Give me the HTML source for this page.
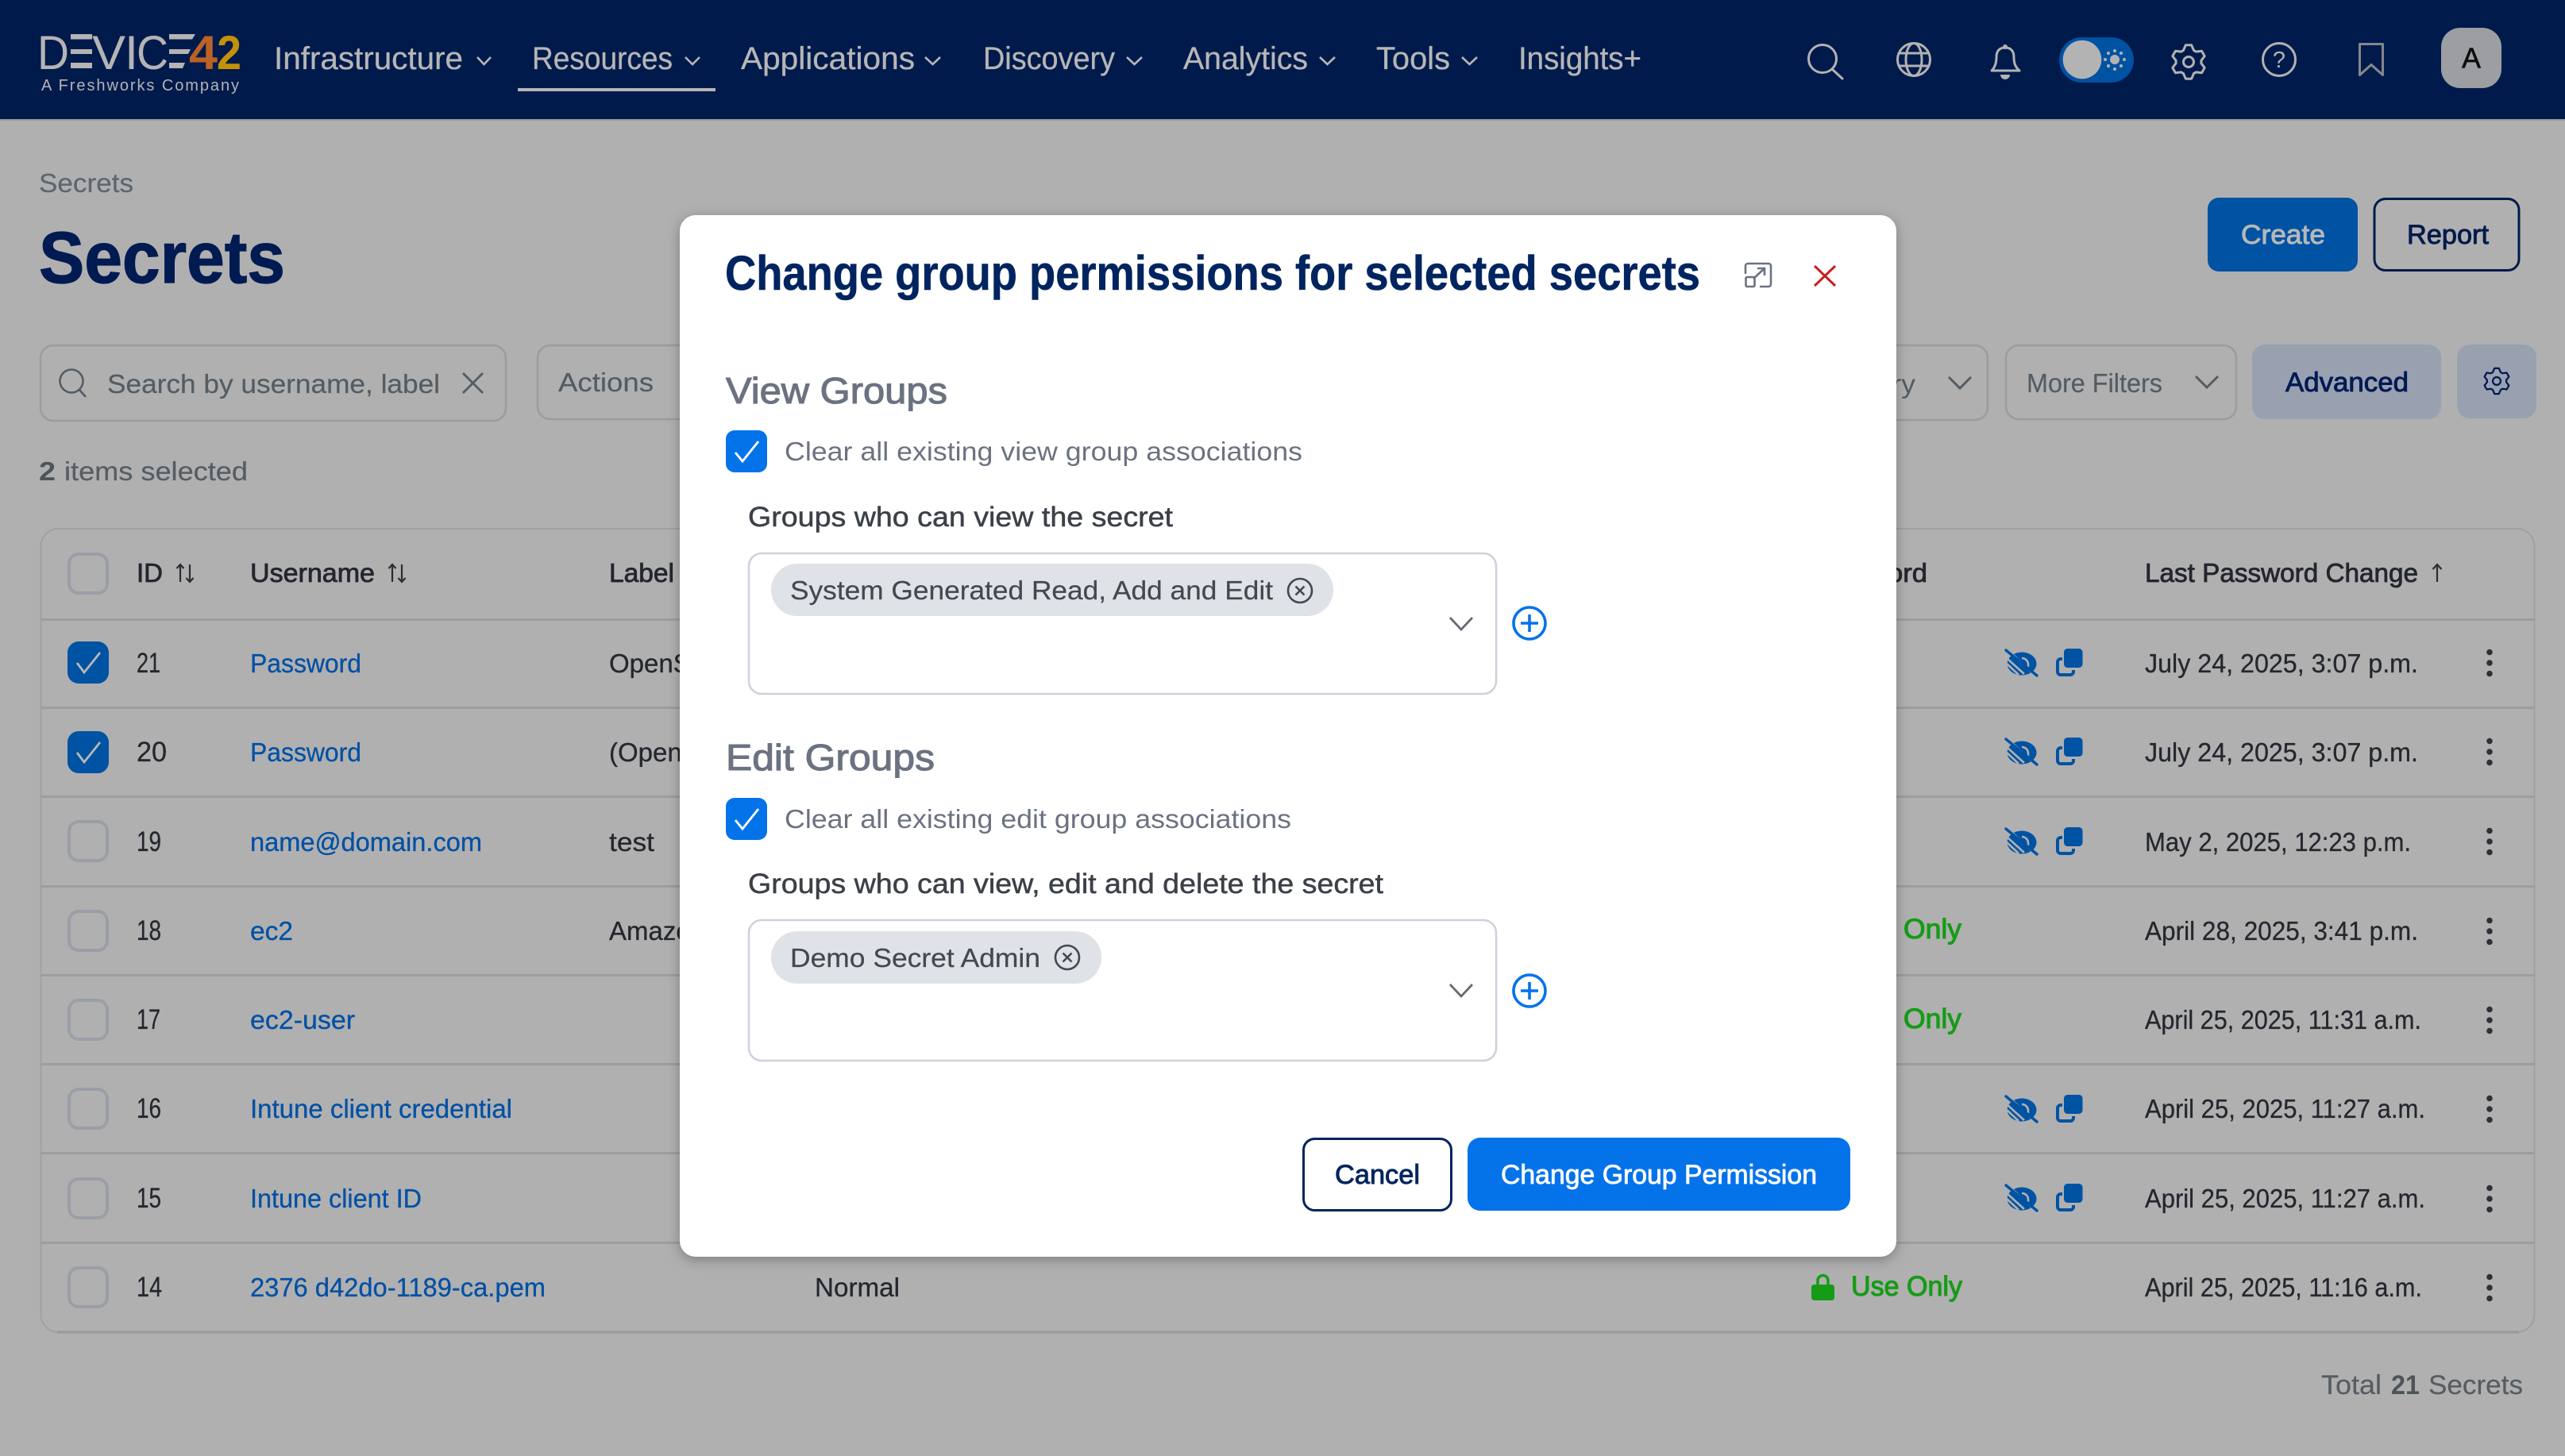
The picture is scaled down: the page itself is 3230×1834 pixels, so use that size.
<!DOCTYPE html>
<html lang="en">
<head>
<meta charset="utf-8">
<title>Secrets</title>
<style>
html,body{margin:0;padding:0;background:#b0b0b0;width:3230px;height:1834px;overflow:hidden}
svg{display:block}
text{font-family:"Liberation Sans",sans-serif;white-space:pre}
.nav{font-size:40px;fill:#b6b6b6;stroke:#b6b6b6;stroke-width:.3}
.row{font-size:33px;fill:#24272e;stroke:#24272e;stroke-width:.3}
.lnk{font-size:33px;fill:#0050a5;stroke:#0050a5;stroke-width:.3}
.hd{font-size:33px;fill:#23262e;stroke:#23262e;stroke-width:.8}
.ok{font-size:35px;fill:#169b16;stroke:#169b16;stroke-width:1.1}
.sec{font-size:46px;fill:#6b7280;stroke:#6b7280;stroke-width:1.1}
.clr{font-size:33px;fill:#6b7280}
.lbl{font-size:35px;fill:#3c4048;stroke:#3c4048;stroke-width:.5}
.chip{font-size:33px;fill:#44484f;stroke:#44484f;stroke-width:.2}
</style>
</head>
<body>
<svg xmlns="http://www.w3.org/2000/svg" width="3230" height="1834" viewBox="0 0 3230 1834">
<defs>
<symbol id="gear" overflow="visible" viewBox="-25 -25 50 50" width="50" height="50">
<polygon points="-6.5,-14.6 -3.7,-21.2 3.7,-21.2 6.5,-14.6 9.4,-12.9 16.5,-13.8 20.2,-7.4 15.9,-1.7 15.9,1.7 20.2,7.4 16.5,13.8 9.4,12.9 6.5,14.6 3.7,21.2 -3.7,21.2 -6.5,14.6 -9.4,12.9 -16.5,13.8 -20.2,7.4 -15.9,1.7 -15.9,-1.7 -20.2,-7.4 -16.5,-13.8 -9.4,-12.9" fill="none" stroke="currentColor" stroke-width="3" stroke-linejoin="round"/>
<circle r="6.5" fill="none" stroke="currentColor" stroke-width="3"/>
</symbol>
<symbol id="eye" overflow="visible" viewBox="0 0 42 35" width="42" height="35">
<ellipse cx="21" cy="18" rx="18.5" ry="14.5" fill="#0052a3"/>
<path d="M2 11 L24 31 M2 18 L17 32 M9 6 L34 29" stroke="#b0b0b0" stroke-width="2.6" fill="none"/>
<path d="M21 11 a8 8 0 0 1 8 8 l0 3" stroke="#b0b0b0" stroke-width="2.6" fill="none"/>
<path d="M1 1 L40 33" stroke="#0052a3" stroke-width="3.4" stroke-linecap="round"/>
</symbol>
<symbol id="copy" overflow="visible" viewBox="0 0 34 35" width="34" height="35">
<path d="M8 13 H6 a4 4 0 0 0 -4 4 V29 a4 4 0 0 0 4 4 H18 a4 4 0 0 0 4 -4 V27" fill="none" stroke="#0052a3" stroke-width="4"/>
<rect x="10" y="0" width="23.5" height="24" rx="4.5" fill="#0052a3"/>
</symbol>
<symbol id="cb" overflow="visible" viewBox="0 0 52 53" width="52" height="53">
<rect x="2" y="2" width="48" height="49" rx="12" fill="none" stroke="#9a9ea6" stroke-width="4"/>
</symbol>
<symbol id="cbon" overflow="visible" viewBox="0 0 52 53" width="52" height="53">
<rect width="52" height="53" rx="14" fill="#0052a3"/>
<path d="M12 27 L21 39 L41 14" fill="none" stroke="#b8b8b8" stroke-width="2.8"/>
</symbol>
<symbol id="dots" overflow="visible" viewBox="0 0 10 36" width="10" height="36">
<circle cx="5" cy="4.5" r="3.8" fill="#2d3038"/><circle cx="5" cy="18" r="3.8" fill="#2d3038"/><circle cx="5" cy="31.5" r="3.8" fill="#2d3038"/>
</symbol>
<symbol id="cbm" overflow="visible" viewBox="0 0 52 53" width="52" height="53">
<rect width="52" height="53" rx="11" fill="#0473ea"/>
<path d="M12 28 L21 39 L41 14" fill="none" stroke="#fff" stroke-width="2.8"/>
</symbol>
<symbol id="plus" overflow="visible" viewBox="0 0 44 44" width="44" height="44">
<circle cx="22" cy="22" r="20" fill="none" stroke="#0473ea" stroke-width="3.6"/>
<path d="M22 11 V33 M11 22 H33" stroke="#0473ea" stroke-width="3.6"/>
</symbol>
<symbol id="xc" overflow="visible" viewBox="0 0 34 34" width="34" height="34">
<circle cx="17" cy="17" r="15" fill="none" stroke="#44484f" stroke-width="2.6"/>
<path d="M11.5 11.5 L22.5 22.5 M22.5 11.5 L11.5 22.5" stroke="#44484f" stroke-width="2.6"/>
</symbol>
<symbol id="sort" overflow="visible" viewBox="0 0 24 24" width="24" height="24">
<path d="M6 23 V1 M1.5 6 L6 1 L10.5 6 M18 1 V23 M13.5 18 L18 23 L22.5 18" fill="none" stroke="#2a2d34" stroke-width="2.2"/>
</symbol>
</defs>

<!-- nav -->
<rect width="3230" height="150" fill="#001a4b"/>
<rect y="150" width="3230" height="2" fill="#9a9a9f"/>
<g fill="#b4b4b4" font-size="60">
<text x="47" y="87" font-size="60" textLength="40" lengthAdjust="spacingAndGlyphs" fill="#b4b4b4">D</text>
<path d="M89 43h27v6.500h-27zM89 62h27v6h-27zM89 79h27v7h-27z"/>
<text x="116" y="87" font-size="60" textLength="42" lengthAdjust="spacingAndGlyphs" fill="#b4b4b4">V</text>
<text x="157" y="87" font-size="60" textLength="17" lengthAdjust="spacingAndGlyphs" fill="#b4b4b4">I</text>
<text x="172" y="87" font-size="60" textLength="40" lengthAdjust="spacingAndGlyphs" fill="#b4b4b4">C</text>
<path d="M213 43h33l-4 6.500h-29zM213 62h27l-3 6h-24zM213 79h20l-3 7h-17z"/>
</g>
<text x="238" y="87" font-size="60" textLength="36" lengthAdjust="spacingAndGlyphs" fill="#bb6224" font-weight="bold">4</text>
<text x="273" y="87" font-size="60" textLength="31" lengthAdjust="spacingAndGlyphs" fill="#c4920a" font-weight="bold">2</text>
<text x="52" y="114" font-size="20" textLength="249" fill="#b4b4b4">A Freshworks Company</text>

<text class="nav" x="345" y="87" textLength="238" lengthAdjust="spacingAndGlyphs">Infrastructure</text>
<text class="nav" x="670" y="87" textLength="177" lengthAdjust="spacingAndGlyphs">Resources</text>
<text class="nav" x="933" y="87" textLength="219" lengthAdjust="spacingAndGlyphs">Applications</text>
<text class="nav" x="1238" y="87" textLength="166" lengthAdjust="spacingAndGlyphs">Discovery</text>
<text class="nav" x="1490" y="87" textLength="157" lengthAdjust="spacingAndGlyphs">Analytics</text>
<text class="nav" x="1733" y="87" textLength="93" lengthAdjust="spacingAndGlyphs">Tools</text>
<text class="nav" x="1912" y="87" textLength="155" lengthAdjust="spacingAndGlyphs">Insights+</text>
<g fill="none" stroke="#b6b6b6" stroke-width="2.6">
<path d="M601 72l8.500 9 8.500-9M863 72l9 9 9-9M1165 72l9.500 9 9.500-9M1419 72l9.500 9 9.500-9M1662 72l9.500 9 9.500-9M1841 72l9.500 9 9.500-9"/>
</g>
<rect x="652" y="111" width="249" height="4" fill="#b6b6b6"/>

<g fill="none" stroke="#b2b2b2" stroke-width="3">
<circle cx="2295" cy="74" r="17.500"/><path d="M2307 87l13 12" stroke-linecap="round"/>
<circle cx="2410" cy="75" r="20.500"/><ellipse cx="2410" cy="75" rx="10" ry="20.500"/><path d="M2391 67h38M2391 83h38"/>
<path d="M2508 89C2513 84 2514 78 2514 72C2514 64 2518 60 2525 60C2532 60 2536 64 2536 72C2536 78 2537 84 2543 89Z" stroke-linejoin="round"/>
<circle cx="2870" cy="75" r="20.500"/>
</g>
<circle cx="2525" cy="59" r="3" fill="#b2b2b2"/>
<path d="M2519 94h12a6 6 0 0 1-12 0z" fill="#b2b2b2"/>
<rect x="2593" y="47" width="94" height="57" rx="28.500" fill="#0052a3"/>
<circle cx="2622" cy="75" r="24.300" fill="#b3b3b3"/>
<g fill="#b3b3b3"><circle cx="2663" cy="75" r="6"/><circle cx="2663" cy="64" r="2"/><circle cx="2663" cy="87" r="2"/><circle cx="2651" cy="75" r="2"/><circle cx="2675" cy="75" r="2"/><circle cx="2655" cy="67" r="2"/><circle cx="2671" cy="67" r="2"/><circle cx="2655" cy="83" r="2"/><circle cx="2671" cy="83" r="2"/></g>
<use href="#gear" x="2731" y="53" color="#b2b2b2"/>
<text x="2870" y="85" font-size="29" text-anchor="middle" fill="#b2b2b2">?</text>
<path d="M2971.500 55.500h29v39l-14.500-13-14.500 13z" fill="none" stroke="#85878c" stroke-width="3" stroke-linejoin="round"/>
<rect x="3074" y="35" width="76" height="76" rx="24" fill="#9c9ea2"/>
<text x="3112" y="85.500" font-size="36" text-anchor="middle" fill="#0c0c0c" stroke="#0c0c0c" stroke-width=".5">A</text>

<!-- page header -->
<text x="49" y="242" font-size="33" fill="#5d6670" stroke="#5d6670" stroke-width=".2" textLength="119" lengthAdjust="spacingAndGlyphs">Secrets</text>
<text x="49" y="356" font-size="92" font-weight="bold" fill="#001a52" stroke="#001a52" stroke-width="1.2" textLength="310" lengthAdjust="spacingAndGlyphs">Secrets</text>

<rect x="2780" y="249" width="189" height="93" rx="14" fill="#0052a3"/>
<text x="2822" y="307" font-size="34" fill="#b8b8b8" stroke="#b8b8b8" stroke-width=".9" textLength="106" lengthAdjust="spacingAndGlyphs">Create</text>
<rect x="2990" y="250.500" width="182" height="90" rx="14" fill="none" stroke="#001a4b" stroke-width="3"/>
<text x="3031" y="307" font-size="34" fill="#001a4b" stroke="#001a4b" stroke-width=".9" textLength="103" lengthAdjust="spacingAndGlyphs">Report</text>

<!-- filters -->
<rect x="51" y="435" width="586" height="95" rx="16" fill="none" stroke="#9a9ca1" stroke-width="2.500"/>
<circle cx="90" cy="480" r="14.500" fill="none" stroke="#545c63" stroke-width="2.600"/><path d="M100 491l8 9" stroke="#545c63" stroke-width="2.600"/>
<text x="135" y="495" font-size="33" fill="#545c63" stroke="#545c63" stroke-width=".2" textLength="419" lengthAdjust="spacingAndGlyphs">Search by username, label</text>
<path d="M583 470l25 25M608 470l-25 25" stroke="#545c63" stroke-width="2.800" fill="none"/>
<rect x="677" y="435" width="400" height="93" rx="16" fill="none" stroke="#9a9ca1" stroke-width="2.500"/>
<text x="703" y="493" font-size="33" fill="#545c63" stroke="#545c63" stroke-width=".2" textLength="120" lengthAdjust="spacingAndGlyphs">Actions</text>
<rect x="2200" y="435" width="303" height="94" rx="16" fill="none" stroke="#9a9ca1" stroke-width="2.500"/>
<text x="2268" y="495" font-size="33" fill="#545c63" textLength="144" lengthAdjust="spacingAndGlyphs">Category</text>
<path d="M2454 475l14 14 14-14" fill="none" stroke="#545c63" stroke-width="3"/>
<rect x="2526" y="435" width="290" height="93" rx="16" fill="none" stroke="#9a9ca1" stroke-width="2.500"/>
<text x="2552" y="494" font-size="33" fill="#545c63" stroke="#545c63" stroke-width=".2" textLength="171" lengthAdjust="spacingAndGlyphs">More Filters</text>
<path d="M2765 474l14 14 14-14" fill="none" stroke="#545c63" stroke-width="3"/>
<rect x="2836" y="434" width="238" height="94" rx="16" fill="#99a1b1"/>
<text x="2878" y="493" font-size="34" fill="#001a52" stroke="#001a52" stroke-width=".9" textLength="155" lengthAdjust="spacingAndGlyphs">Advanced</text>
<rect x="3094" y="434" width="100" height="93" rx="16" fill="#99a1b1"/>
<g transform="translate(3144 480) scale(.76)"><use href="#gear" x="-25" y="-25" color="#001a52"/></g>

<text x="49" y="605" font-size="33" fill="#4c545a" font-weight="bold" textLength="21" lengthAdjust="spacingAndGlyphs">2</text>
<text x="81" y="605" font-size="33" fill="#555d64" stroke="#555d64" stroke-width=".2" textLength="231" lengthAdjust="spacingAndGlyphs">items selected</text>

<!-- table -->
<rect x="51.500" y="666" width="3140" height="1012" rx="22" fill="none" stroke="#a0a1a5" stroke-width="2"/>
<g fill="#9c9da1">
<rect x="52" y="779" width="3140" height="3"/>
<rect x="52" y="890" width="3140" height="3"/>
<rect x="52" y="1002" width="3140" height="3"/>
<rect x="52" y="1115" width="3140" height="3"/>
<rect x="52" y="1227" width="3140" height="3"/>
<rect x="52" y="1339" width="3140" height="3"/>
<rect x="52" y="1451" width="3140" height="3"/>
<rect x="52" y="1564" width="3140" height="3"/>
<rect x="72" y="1676" width="3100" height="4"/>
</g>

<use href="#cb" x="85" y="696"/>
<text class="hd" x="172" y="733" textLength="33" lengthAdjust="spacingAndGlyphs">ID</text>
<use href="#sort" x="221" y="710"/>
<text class="hd" x="315" y="733" textLength="157" lengthAdjust="spacingAndGlyphs">Username</text>
<use href="#sort" x="488" y="710"/>
<text class="hd" x="767" y="733" textLength="82" lengthAdjust="spacingAndGlyphs">Label</text>
<text class="hd" x="2275" y="733" textLength="152" lengthAdjust="spacingAndGlyphs">Password</text>
<text class="hd" x="2701" y="733" textLength="344" lengthAdjust="spacingAndGlyphs">Last Password Change</text>
<path d="M3069 733V711M3063.500 717L3069 711L3074.500 717" fill="none" stroke="#2a2d34" stroke-width="2.200"/>

<!-- rows -->
<use href="#cbon" x="85" y="808"/>
<text class="row" x="172" y="847" font-size="35" style="font-size:35px" textLength="30" lengthAdjust="spacingAndGlyphs">21</text>
<text class="lnk" x="315" y="847" textLength="140" lengthAdjust="spacingAndGlyphs">Password</text>
<text class="row" x="767" y="847">OpenSSH</text>
<use href="#eye" x="2525" y="818"/><use href="#copy" x="2589" y="817"/>
<text class="row" x="2701" y="847" textLength="344" lengthAdjust="spacingAndGlyphs">July 24, 2025, 3:07 p.m.</text>
<use href="#dots" x="3130" y="817"/>

<use href="#cbon" x="85" y="921"/>
<text class="row" x="172" y="959" style="font-size:35px" textLength="38" lengthAdjust="spacingAndGlyphs">20</text>
<text class="lnk" x="315" y="959" textLength="140" lengthAdjust="spacingAndGlyphs">Password</text>
<text class="row" x="767" y="959">(OpenSSH</text>
<use href="#eye" x="2525" y="930"/><use href="#copy" x="2589" y="929"/>
<text class="row" x="2701" y="959" textLength="344" lengthAdjust="spacingAndGlyphs">July 24, 2025, 3:07 p.m.</text>
<use href="#dots" x="3130" y="929"/>

<use href="#cb" x="85" y="1033"/>
<text class="row" x="172" y="1072" style="font-size:35px" textLength="31" lengthAdjust="spacingAndGlyphs">19</text>
<text class="lnk" x="315" y="1072" textLength="292" lengthAdjust="spacingAndGlyphs">name@domain.com</text>
<text class="row" x="767" y="1072" textLength="57" lengthAdjust="spacingAndGlyphs">test</text>
<use href="#eye" x="2525" y="1043"/><use href="#copy" x="2589" y="1042"/>
<text class="row" x="2701" y="1072" textLength="335" lengthAdjust="spacingAndGlyphs">May 2, 2025, 12:23 p.m.</text>
<use href="#dots" x="3130" y="1042"/>

<use href="#cb" x="85" y="1146"/>
<text class="row" x="172" y="1184" style="font-size:35px" textLength="31" lengthAdjust="spacingAndGlyphs">18</text>
<text class="lnk" x="315" y="1184" textLength="54" lengthAdjust="spacingAndGlyphs">ec2</text>
<text class="row" x="767" y="1184">Amazon</text>
<text class="ok" x="2397" y="1182" textLength="73" lengthAdjust="spacingAndGlyphs">Only</text>
<text class="row" x="2701" y="1184" textLength="344" lengthAdjust="spacingAndGlyphs">April 28, 2025, 3:41 p.m.</text>
<use href="#dots" x="3130" y="1155"/>

<use href="#cb" x="85" y="1258"/>
<text class="row" x="172" y="1296" style="font-size:35px" textLength="30" lengthAdjust="spacingAndGlyphs">17</text>
<text class="lnk" x="315" y="1296" textLength="132" lengthAdjust="spacingAndGlyphs">ec2-user</text>
<text class="ok" x="2397" y="1295" textLength="73" lengthAdjust="spacingAndGlyphs">Only</text>
<text class="row" x="2701" y="1296" textLength="348" lengthAdjust="spacingAndGlyphs">April 25, 2025, 11:31 a.m.</text>
<use href="#dots" x="3130" y="1267"/>

<use href="#cb" x="85" y="1370"/>
<text class="row" x="172" y="1408" style="font-size:35px" textLength="31" lengthAdjust="spacingAndGlyphs">16</text>
<text class="lnk" x="315" y="1408" textLength="330" lengthAdjust="spacingAndGlyphs">Intune client credential</text>
<use href="#eye" x="2525" y="1380"/><use href="#copy" x="2589" y="1379"/>
<text class="row" x="2701" y="1408" textLength="353" lengthAdjust="spacingAndGlyphs">April 25, 2025, 11:27 a.m.</text>
<use href="#dots" x="3130" y="1379"/>

<use href="#cb" x="85" y="1483"/>
<text class="row" x="172" y="1521" style="font-size:35px" textLength="31" lengthAdjust="spacingAndGlyphs">15</text>
<text class="lnk" x="315" y="1521" textLength="216" lengthAdjust="spacingAndGlyphs">Intune client ID</text>
<use href="#eye" x="2525" y="1492"/><use href="#copy" x="2589" y="1491"/>
<text class="row" x="2701" y="1521" textLength="353" lengthAdjust="spacingAndGlyphs">April 25, 2025, 11:27 a.m.</text>
<use href="#dots" x="3130" y="1492"/>

<use href="#cb" x="85" y="1595"/>
<text class="row" x="172" y="1633" style="font-size:35px" textLength="32" lengthAdjust="spacingAndGlyphs">14</text>
<text class="lnk" x="315" y="1633" textLength="372" lengthAdjust="spacingAndGlyphs">2376 d42do-1189-ca.pem</text>
<text class="row" x="1026" y="1633" textLength="107" lengthAdjust="spacingAndGlyphs">Normal</text>
<path d="M2289 1620v-7a6.500 6.500 0 0 1 13 0v7" fill="none" stroke="#169b16" stroke-width="3.500"/>
<rect x="2281" y="1618" width="29" height="20" rx="3.500" fill="#169b16"/>
<text class="ok" x="2331" y="1632" textLength="140" lengthAdjust="spacingAndGlyphs">Use Only</text>
<text class="row" x="2701" y="1633" textLength="349" lengthAdjust="spacingAndGlyphs">April 25, 2025, 11:16 a.m.</text>
<use href="#dots" x="3130" y="1604"/>

<text x="2923" y="1756" font-size="34" fill="#555d64" stroke="#555d64" stroke-width=".2" textLength="76" lengthAdjust="spacingAndGlyphs">Total</text>
<text x="3011" y="1756" font-size="34" fill="#4c545a" font-weight="bold" textLength="36" lengthAdjust="spacingAndGlyphs">21</text>
<text x="3058" y="1756" font-size="34" fill="#555d64" stroke="#555d64" stroke-width=".2" textLength="119" lengthAdjust="spacingAndGlyphs">Secrets</text>

<!-- modal -->
<rect x="856" y="271" width="1532" height="1312" rx="20" fill="#fff" style="filter:drop-shadow(0 4px 8px rgba(0,0,0,.28))"/>
<text x="913" y="365" font-size="61" font-weight="bold" fill="#00245f" stroke="#00245f" stroke-width=".6" textLength="1228" lengthAdjust="spacingAndGlyphs">Change group permissions for selected secrets</text>
<g transform="translate(-6 0)">
<path d="M2204 345V335a3 3 0 0 1 3-3H2233a3 3 0 0 1 3 3V358a3 3 0 0 1-3 3H2222" fill="none" stroke="#6b7280" stroke-width="2.600"/>
<rect x="2204.500" y="349" width="11" height="12" rx="1.500" fill="none" stroke="#6b7280" stroke-width="2.600"/>
<path d="M2214 351L2228 338M2219 338H2228V347" fill="none" stroke="#6b7280" stroke-width="2.600"/>
<path d="M2291 335L2317 360M2317 335L2291 360" stroke="#c81e1e" stroke-width="3" fill="none"/>
</g>

<text class="sec" x="914" y="508" textLength="279" lengthAdjust="spacingAndGlyphs">View Groups</text>
<use href="#cbm" x="914" y="542"/>
<text class="clr" x="988" y="580" textLength="652" lengthAdjust="spacingAndGlyphs">Clear all existing view group associations</text>
<text class="lbl" x="942" y="663" textLength="535" lengthAdjust="spacingAndGlyphs">Groups who can view the secret</text>
<rect x="943" y="697" width="941" height="177" rx="16" fill="#fff" stroke="#cdd2da" stroke-width="2.500"/>
<rect x="971" y="710" width="708" height="66" rx="33" fill="#dfe2e6"/>
<text class="chip" x="995" y="755" textLength="608" lengthAdjust="spacingAndGlyphs">System Generated Read, Add and Edit</text>
<use href="#xc" x="1620" y="727"/>
<path d="M1826 778l14 15 14-15" fill="none" stroke="#666b73" stroke-width="2.800"/>
<use href="#plus" x="1904" y="763"/>

<text class="sec" x="914" y="970" textLength="263" lengthAdjust="spacingAndGlyphs">Edit Groups</text>
<use href="#cbm" x="914" y="1005"/>
<text class="clr" x="988" y="1043" textLength="638" lengthAdjust="spacingAndGlyphs">Clear all existing edit group associations</text>
<text class="lbl" x="942" y="1125" textLength="800" lengthAdjust="spacingAndGlyphs">Groups who can view, edit and delete the secret</text>
<rect x="943" y="1159" width="941" height="177" rx="16" fill="#fff" stroke="#cdd2da" stroke-width="2.500"/>
<rect x="971" y="1173" width="416" height="66" rx="33" fill="#dfe2e6"/>
<text class="chip" x="995" y="1218" textLength="315" lengthAdjust="spacingAndGlyphs">Demo Secret Admin</text>
<use href="#xc" x="1327" y="1189"/>
<path d="M1826 1240l14 15 14-15" fill="none" stroke="#666b73" stroke-width="2.800"/>
<use href="#plus" x="1904" y="1226"/>

<rect x="1641.500" y="1434.500" width="186" height="90" rx="14" fill="#fff" stroke="#00245f" stroke-width="3"/>
<text x="1681" y="1491" font-size="34" fill="#00245f" stroke="#00245f" stroke-width=".9" textLength="107" lengthAdjust="spacingAndGlyphs">Cancel</text>
<rect x="1848" y="1433" width="482" height="92" rx="16" fill="#0473ea"/>
<text x="1890" y="1491" font-size="34" fill="#fff" stroke="#fff" stroke-width=".8" textLength="398" lengthAdjust="spacingAndGlyphs">Change Group Permission</text>
</svg>
</body>
</html>
